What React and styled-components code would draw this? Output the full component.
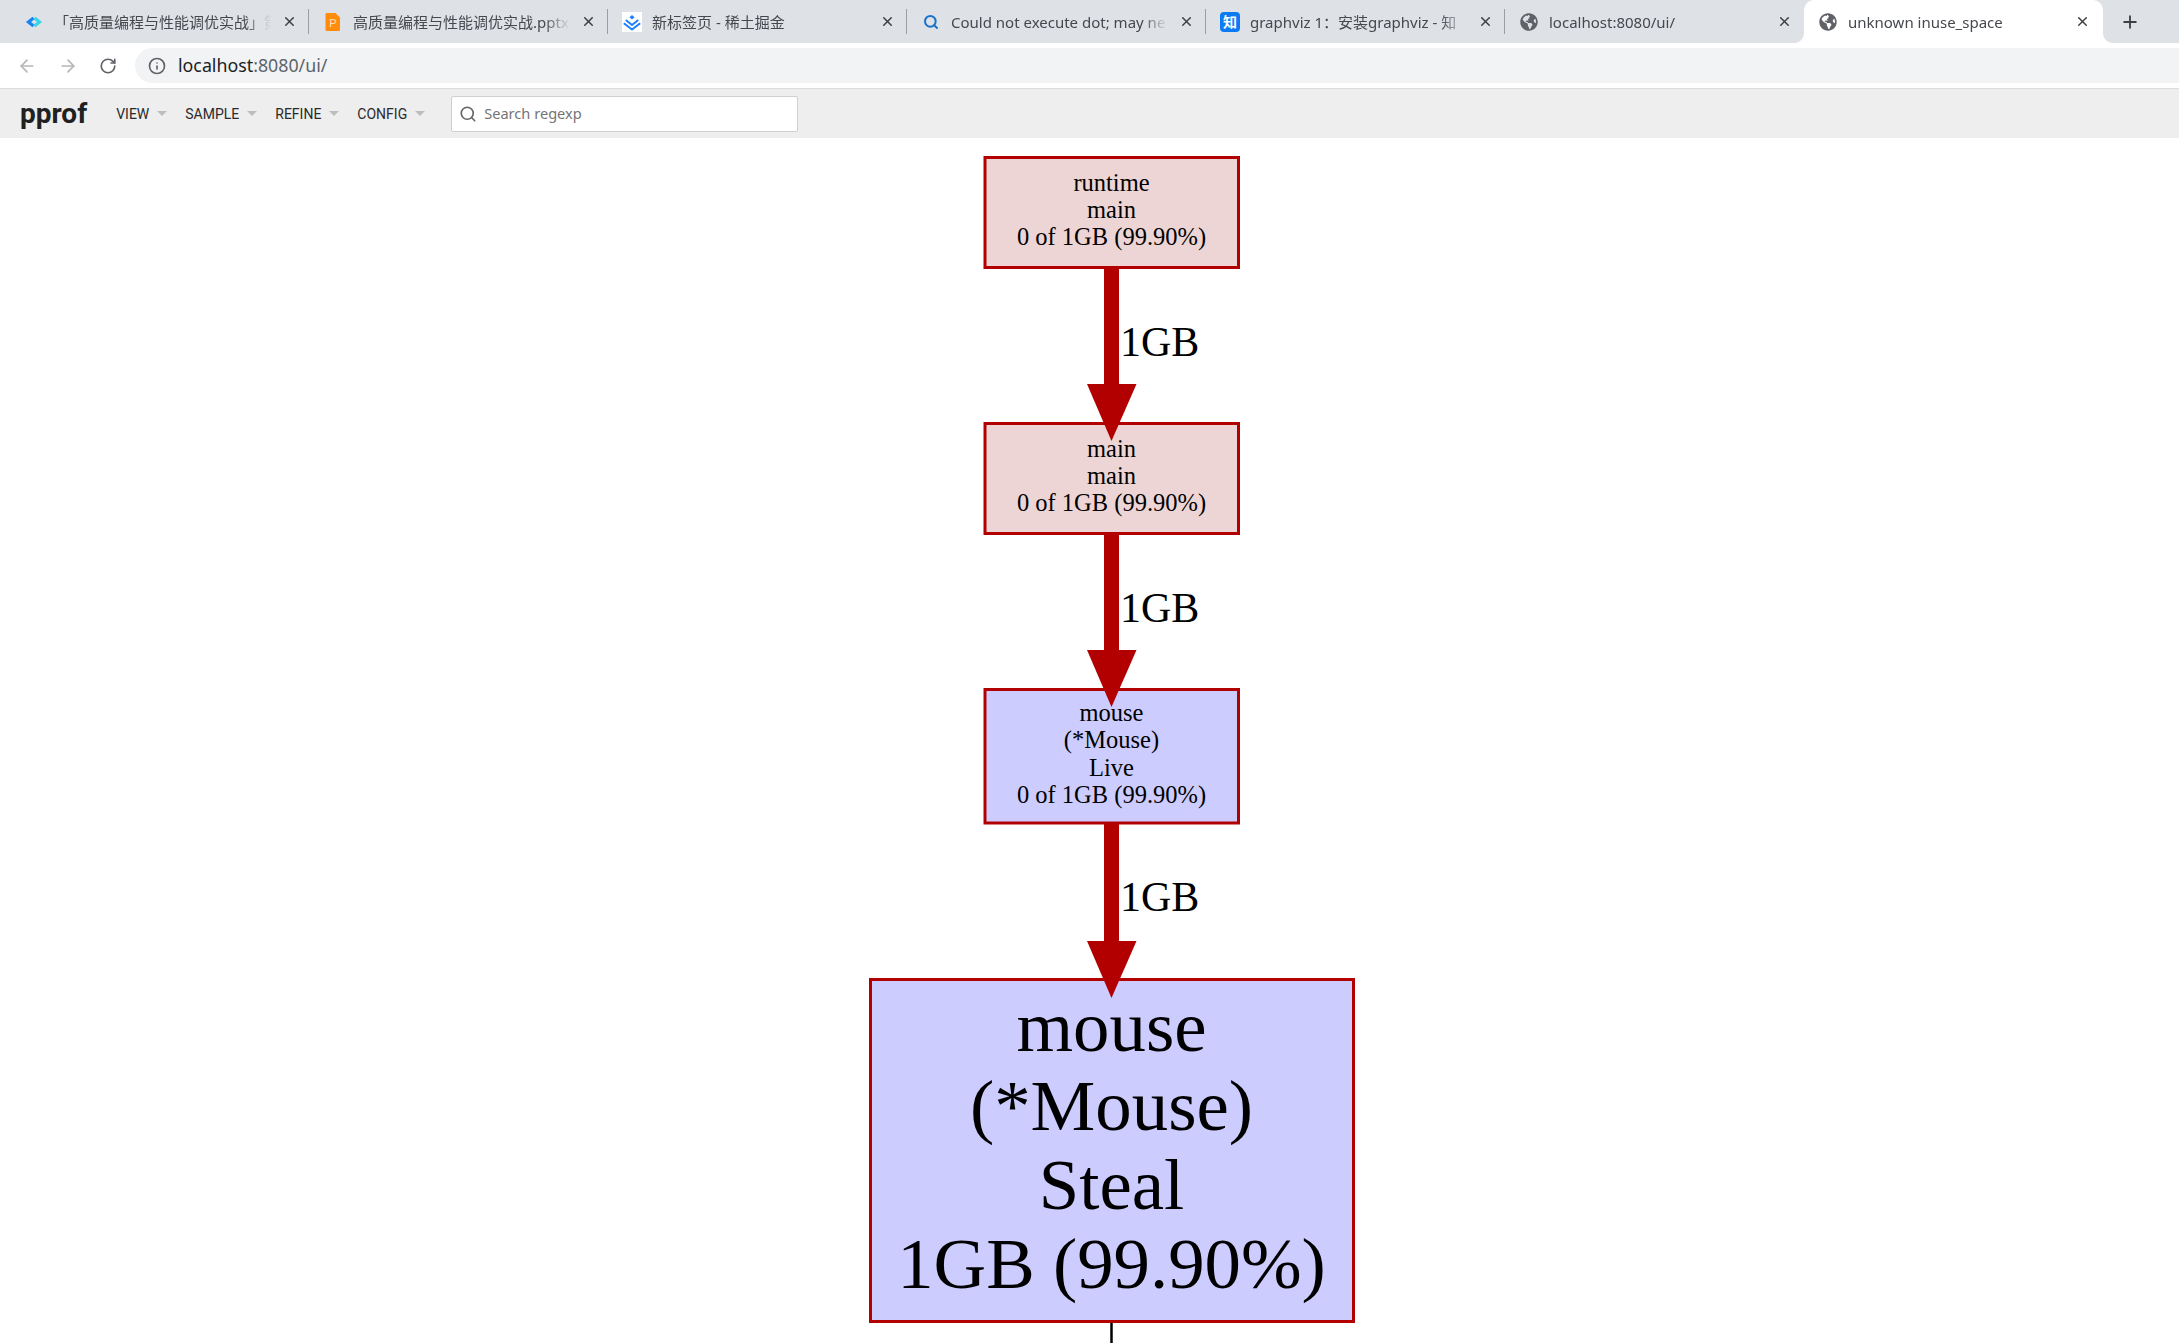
import React from "react";
import styled, { createGlobalStyle } from "styled-components";
import { ArrowLeft, ArrowRight, RotateCw, Info, Search, X, Plus } from "lucide-react";
import { FaGlobeAmericas } from "react-icons/fa";

const GlobalStyle = createGlobalStyle`
  html, body { margin: 0; padding: 0; background: #fff; }
  body { width: 2179px; height: 1343px; overflow: hidden; font-family: "Noto Sans", "Noto Sans CJK SC", sans-serif; }
`;

const Page = styled.div`
  width: 2179px;
  height: 1343px;
  display: flex;
  flex-direction: column;
  overflow: hidden;
`;

const TabStrip = styled.div`
  height: 43px;
  flex: none;
  display: flex;
  align-items: stretch;
  padding-left: 10px;
  background: #dee1e6;
`;

const Tab = styled.div`
  position: relative;
  width: 299px;
  flex: none;
  display: flex;
  align-items: center;
  padding: 0 ${(p) => (p.$active ? 13 : 12)}px 0 14px;
  box-sizing: border-box;
  gap: 10px;
  background: ${(p) => (p.$active ? "#fff" : "transparent")};
  border-radius: ${(p) => (p.$active ? "10px 10px 0 0" : "0")};

  &::after {
    content: "";
    position: absolute;
    display: ${(p) => (p.$divider ? "block" : "none")};
    right: 0;
    top: 9px;
    width: 1px;
    height: 25px;
    background: #9b9fa4;
  }
`;

const Flare = styled.span`
  position: absolute;
  bottom: 0;
  width: 10px;
  height: 10px;
  ${(p) => (p.$side === "left" ? "left: -10px;" : "right: -10px;")}
  background: radial-gradient(circle at ${(p) => (p.$side === "left" ? "0 0" : "100% 0")}, transparent 9.5px, #fff 10.5px);
`;

const Favicon = styled.span`
  width: 20px;
  height: 20px;
  flex: none;
  display: flex;
  align-items: center;
  justify-content: center;
`;

const ZhihuIcon = styled.span`
  width: 20px;
  height: 20px;
  display: flex;
  align-items: center;
  justify-content: center;
  border-radius: 4px;
  background: #0a7bf5;
  color: #fff;
  font-size: 14px;
  font-weight: 700;
  line-height: 1;
`;

const TabTitle = styled.span`
  flex: 1;
  min-width: 0;
  overflow: hidden;
  white-space: nowrap;
  font-size: 15px;
  line-height: 20px;
  padding-top: 1px;
  color: #45484d;
  -webkit-mask-image: linear-gradient(to right, #000 calc(100% - 26px), transparent 100%);
  mask-image: linear-gradient(to right, #000 calc(100% - 26px), transparent 100%);
`;

const CloseButton = styled.span`
  width: 16px;
  height: 16px;
  flex: none;
  display: flex;
  align-items: center;
  justify-content: center;
  color: #3c4043;
`;

const NewTab = styled.span`
  margin-left: 17px;
  width: 20px;
  display: flex;
  align-items: center;
  justify-content: center;
  color: #3c4043;
`;

const AddressBar = styled.div`
  height: 46px;
  flex: none;
  display: flex;
  align-items: center;
  box-sizing: border-box;
  padding: 0 0 0 17px;
  background: #fff;
  border-bottom: 1px solid #dcdcdc;
`;

const NavButton = styled.span`
  width: 20px;
  height: 20px;
  margin-right: ${(p) => p.$gap}px;
  display: flex;
  align-items: center;
  justify-content: center;
  color: ${(p) => (p.$disabled ? "#b4b6b9" : "#5f6368")};
`;

const Omnibox = styled.div`
  flex: 1;
  height: 35px;
  display: flex;
  align-items: center;
  gap: 12px;
  padding-left: 13px;
  border-radius: 18px 0 0 18px;
  background: #f1f3f4;
  color: #5f6368;
`;

const Url = styled.span`
  font-size: 17.8px;
  color: #5f6368;
  margin-top: -2px;
`;

const UrlHost = styled.span`
  color: #202124;
`;

const Header = styled.div`
  height: 49px;
  flex: none;
  display: flex;
  align-items: center;
  padding-left: 20px;
  background: #eeeeee;
`;

const Brand = styled.div`
  font-family: Roboto, "Noto Sans", sans-serif;
  font-size: 28px;
  font-weight: 700;
  color: #212121;
  margin-right: 29px;
`;

const Menu = styled.div`
  display: flex;
  align-items: center;
  gap: 18px;
  margin-right: 26px;
`;

const MenuItem = styled.div`
  display: flex;
  align-items: center;
  gap: 8px;
  font-family: Roboto, "Noto Sans", sans-serif;
  font-size: 14px;
  color: #2a2a2a;
`;

const Caret = styled.span`
  width: 0;
  height: 0;
  border-left: 5px solid transparent;
  border-right: 5px solid transparent;
  border-top: 5px solid #bdbdbd;
`;

const SearchBox = styled.div`
  width: 347px;
  height: 36px;
  box-sizing: border-box;
  display: flex;
  align-items: center;
  gap: 7px;
  padding-left: 7px;
  background: #fff;
  border: 1px solid #cfcfcf;
  border-radius: 2px;
  color: #666;
`;

const SearchHint = styled.span`
  font-family: "Noto Sans", sans-serif;
  font-size: 14.6px;
  color: #757575;
  margin-top: -1px;
`;

const GraphArea = styled.div`
  flex: 1;
  min-height: 0;
  background: #fff;
  overflow: hidden;
`;

const GraphSvg = styled.svg`
  display: block;
`;

const GraphText = styled.text`
  font-family: "Liberation Serif", "Times New Roman", serif;
  font-size: ${(p) => p.$size}px;
  fill: #000;
`;

const TOP = 138;
const CX = 1111.5;

const nodes = [
  { x: 985, y: 157.5, w: 253.5, h: 110, fill: "#edd5d5", size: 24.5, base: 191, lh: 27.2, lines: ["runtime", "main", "0 of 1GB (99.90%)"] },
  { x: 985, y: 423.5, w: 253.5, h: 110, fill: "#edd5d5", size: 24.5, base: 457, lh: 27.2, lines: ["main", "main", "0 of 1GB (99.90%)"] },
  { x: 985, y: 689.5, w: 253.5, h: 133.5, fill: "#ccccff", size: 24.5, base: 721, lh: 27.3, lines: ["mouse", "(*Mouse)", "Live", "0 of 1GB (99.90%)"] },
  { x: 870.5, y: 979.5, w: 483, h: 342, fill: "#ccccff", size: 72.8, base: 1051, lh: 79, lines: ["mouse", "(*Mouse)", "Steal", "1GB (99.90%)"] },
];

const edges = [
  { from: 268, head: 384, tip: 441, label: 356 },
  { from: 534, head: 650, tip: 707, label: 622 },
  { from: 824, head: 941, tip: 998, label: 911 },
];

function Graph() {
  return (
    <GraphSvg width="2179" height={1343 - TOP} viewBox={`0 ${TOP} 2179 ${1343 - TOP}`}>
      <line x1={CX} y1="1323" x2={CX} y2="1343" stroke="#000" strokeWidth="2.5" />
      {nodes.map((n, i) => (
        <g key={i}>
          <rect x={n.x} y={n.y} width={n.w} height={n.h} fill={n.fill} stroke="#b20000" strokeWidth="3" />
          {n.lines.map((line, j) => (
            <GraphText key={j} x={CX} y={n.base + j * n.lh} textAnchor="middle" $size={n.size}>
              {line}
            </GraphText>
          ))}
        </g>
      ))}
      {edges.map((e, i) => (
        <g key={i}>
          <rect x="1104" y={e.from} width="15" height={e.head - e.from} fill="#b20000" />
          <polygon points={`1087,${e.head} 1136.5,${e.head} ${CX},${e.tip}`} fill="#b20000" />
          <GraphText x="1120" y={e.label} $size={42}>1GB</GraphText>
        </g>
      ))}
    </GraphSvg>
  );
}

const DiamondIcon = () => (
  <svg width="20" height="20" viewBox="0 0 20 20" fill="none" strokeWidth="3.2">
    <path d="M9.5 6 L4.5 10 L9.5 14" stroke="#1683f5" />
    <path d="M10.5 6 L15.5 10 L10.5 14" stroke="#35d6e8" />
  </svg>
);

const PptIcon = () => (
  <svg width="16" height="20" viewBox="0 0 16 20">
    <path d="M1.5 1 H10.5 L15 5.5 V18 a1 1 0 0 1 -1 1 H1.5 a1 1 0 0 1 -1 -1 V2 a1 1 0 0 1 1 -1 Z" fill="#ff8c0a" />
    <text x="8" y="15" textAnchor="middle" fontSize="11" fill="#ffe3bd" fontFamily="Liberation Sans, sans-serif">P</text>
  </svg>
);

const JuejinIcon = () => (
  <svg width="20" height="20" viewBox="0 0 20 20">
    <rect width="20" height="20" fill="#fff" />
    <path d="M10 3 L12.6 5.2 L10 7.4 L7.4 5.2 Z" fill="#1e80ff" />
    <path d="M3.8 8 L10 13 L16.2 8" fill="none" stroke="#1e80ff" strokeWidth="2" />
    <path d="M1.8 11.2 L10 17.6 L18.2 11.2" fill="none" stroke="#1e80ff" strokeWidth="2" />
  </svg>
);

const tabs = [
  { title: "「高质量编程与性能调优实战」第", icon: <DiamondIcon />, divider: true },
  { title: "高质量编程与性能调优实战.pptx", icon: <PptIcon />, divider: true },
  { title: "新标签页 - 稀土掘金", icon: <JuejinIcon />, divider: true },
  { title: "Could not execute dot; may ne", icon: <Search size={16} strokeWidth={3} color="#1a73c8" />, divider: true },
  { title: "graphviz 1：安装graphviz - 知", icon: <ZhihuIcon>知</ZhihuIcon>, divider: true },
  { title: "localhost:8080/ui/", icon: <FaGlobeAmericas size={18} color="#5f6368" /> },
  { title: "unknown inuse_space", icon: <FaGlobeAmericas size={18} color="#5f6368" />, active: true },
];

const menus = ["VIEW", "SAMPLE", "REFINE", "CONFIG"];

export default function App() {
  return (
    <Page>
      <GlobalStyle />
      <TabStrip>
        {tabs.map((t) => (
          <Tab key={t.title} $active={t.active} $divider={t.divider}>
            {t.active && <Flare $side="left" />}
            <Favicon>{t.icon}</Favicon>
            <TabTitle>{t.title}</TabTitle>
            <CloseButton><X size={15} strokeWidth={2.4} /></CloseButton>
            {t.active && <Flare $side="right" />}
          </Tab>
        ))}
        <NewTab><Plus size={20} strokeWidth={2.2} /></NewTab>
      </TabStrip>
      <AddressBar>
        <NavButton $disabled $gap={21}><ArrowLeft size={20} strokeWidth={2} /></NavButton>
        <NavButton $disabled $gap={20}><ArrowRight size={20} strokeWidth={2} /></NavButton>
        <NavButton $gap={17}><RotateCw size={18} strokeWidth={2.2} /></NavButton>
        <Omnibox>
          <Info size={18} strokeWidth={2.2} />
          <Url><UrlHost>localhost</UrlHost>:8080/ui/</Url>
        </Omnibox>
      </AddressBar>
      <Header>
        <Brand>pprof</Brand>
        <Menu>
          {menus.map((m) => (
            <MenuItem key={m}>{m}<Caret /></MenuItem>
          ))}
        </Menu>
        <SearchBox>
          <Search size={18} strokeWidth={2.2} />
          <SearchHint>Search regexp</SearchHint>
        </SearchBox>
      </Header>
      <GraphArea><Graph /></GraphArea>
    </Page>
  );
}
